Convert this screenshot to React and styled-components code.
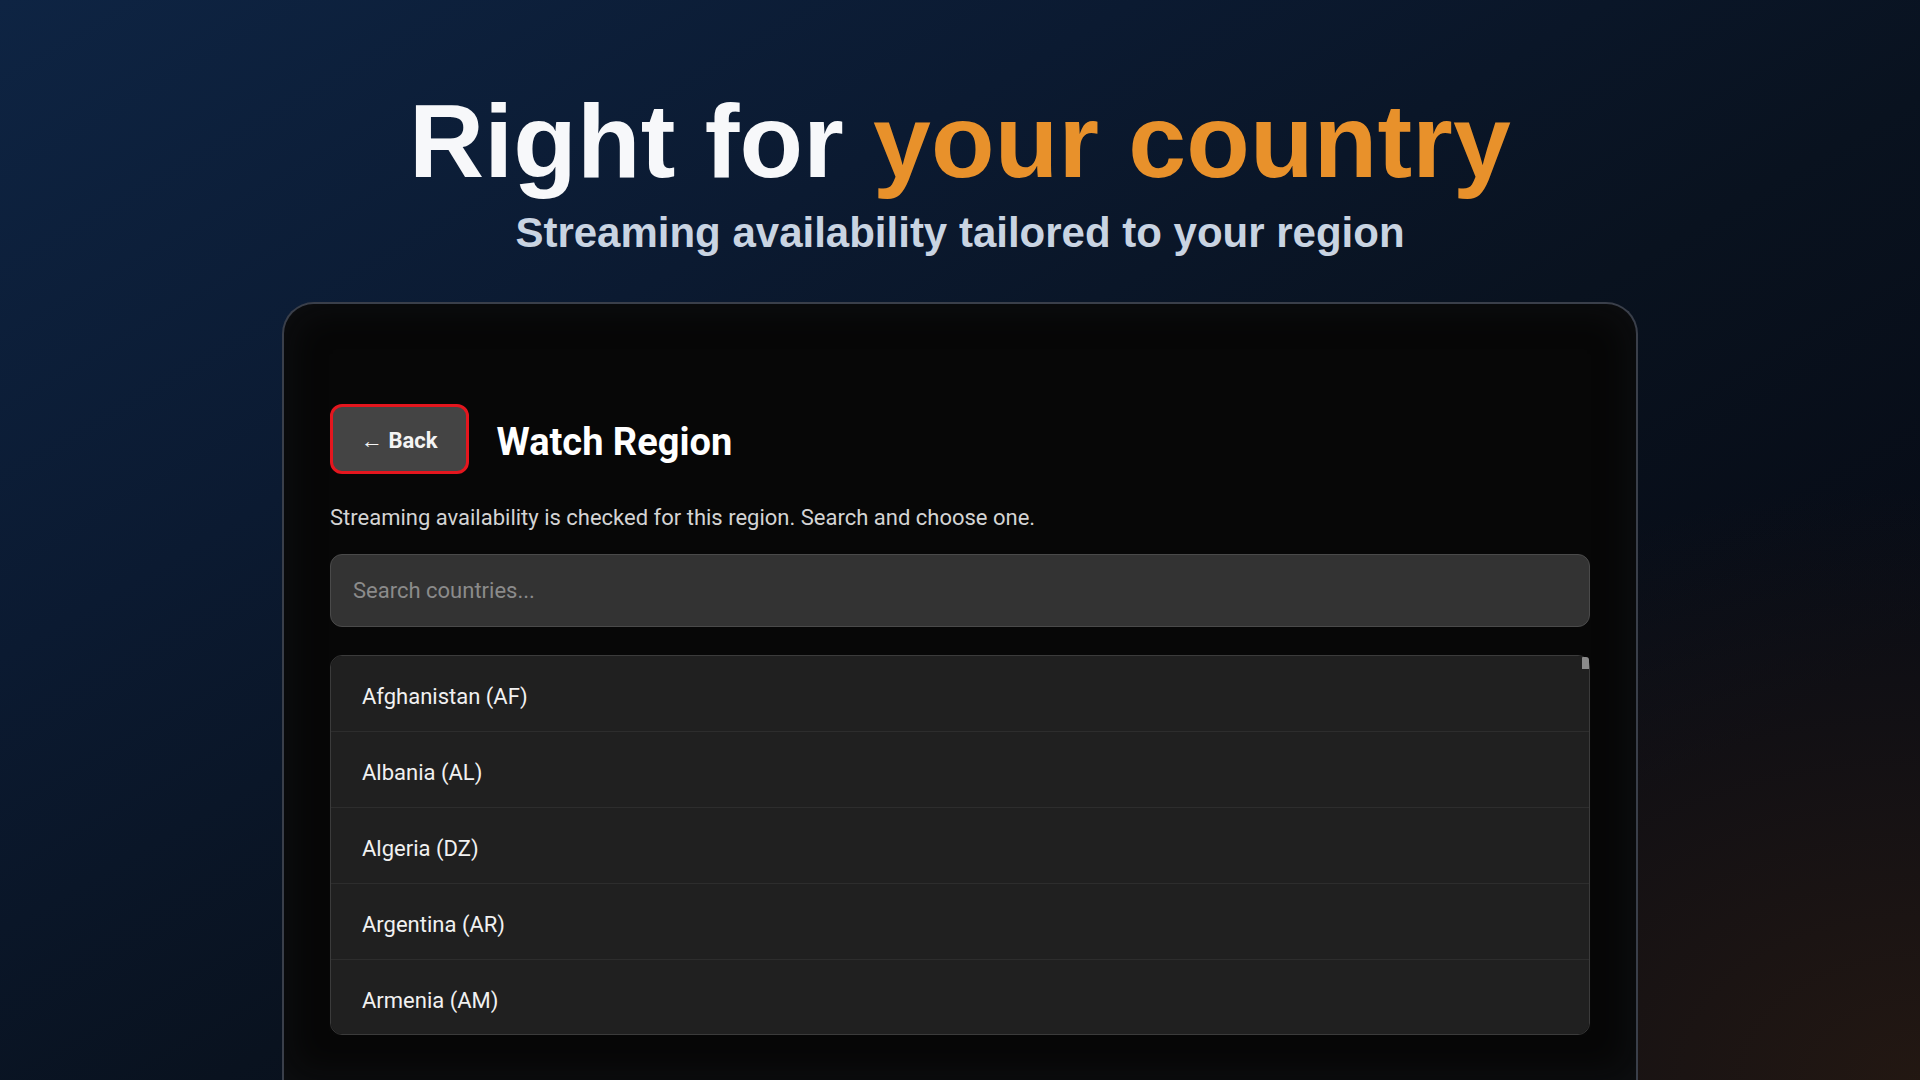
import styled, { createGlobalStyle } from 'styled-components';

const COUNTRIES = 'Afghanistan:AF|Albania:AL|Algeria:DZ|Argentina:AR|Armenia:AM|Australia:AU|Austria:AT|Azerbaijan:AZ|Bahamas:BS|Bahrain:BH|Bangladesh:BD|Barbados:BB|Belarus:BY|Belgium:BE|Belize:BZ|Benin:BJ|Bermuda:BM|Bhutan:BT|Bolivia:BO|Bosnia and Herzegovina:BA|Botswana:BW|Brazil:BR|Brunei:BN|Bulgaria:BG|Burkina Faso:BF|Cambodia:KH|Cameroon:CM|Canada:CA|Cape Verde:CV|Chad:TD|Chile:CL|China:CN|Colombia:CO|Costa Rica:CR|Croatia:HR|Cuba:CU|Cyprus:CY|Czech Republic:CZ|Denmark:DK|Dominican Republic:DO|Ecuador:EC|Egypt:EG|El Salvador:SV|Estonia:EE|Ethiopia:ET|Fiji:FJ|Finland:FI|France:FR|Gabon:GA|Georgia:GE|Germany:DE|Ghana:GH|Greece:GR|Guatemala:GT|Guyana:GY|Haiti:HT|Honduras:HN|Hong Kong:HK|Hungary:HU|Iceland:IS|India:IN|Indonesia:ID|Iraq:IQ|Ireland:IE|Israel:IL|Italy:IT|Ivory Coast:CI|Jamaica:JM|Japan:JP|Jordan:JO|Kazakhstan:KZ|Kenya:KE|Kosovo:XK|Kuwait:KW|Kyrgyzstan:KG|Laos:LA|Latvia:LV|Lebanon:LB|Libya:LY|Liechtenstein:LI|Lithuania:LT|Luxembourg:LU|Macao:MO|Madagascar:MG|Malawi:MW|Malaysia:MY|Maldives:MV|Mali:ML|Malta:MT|Mauritius:MU|Mexico:MX|Moldova:MD|Monaco:MC|Mongolia:MN|Montenegro:ME|Morocco:MA|Mozambique:MZ|Namibia:NA|Nepal:NP|Netherlands:NL|New Zealand:NZ|Nicaragua:NI|Niger:NE|Nigeria:NG|North Macedonia:MK|Norway:NO|Oman:OM|Pakistan:PK|Palestine:PS|Panama:PA|Papua New Guinea:PG|Paraguay:PY|Peru:PE|Philippines:PH|Poland:PL|Portugal:PT|Qatar:QA|Romania:RO|Russia:RU|Rwanda:RW|San Marino:SM|Saudi Arabia:SA|Senegal:SN|Serbia:RS|Seychelles:SC|Singapore:SG|Slovakia:SK|Slovenia:SI|South Africa:ZA|South Korea:KR|Spain:ES|Sri Lanka:LK|Sweden:SE|Switzerland:CH|Taiwan:TW|Tajikistan:TJ|Tanzania:TZ|Thailand:TH|Trinidad and Tobago:TT|Tunisia:TN|Turkey:TR|Turkmenistan:TM|Uganda:UG|Ukraine:UA|United Arab Emirates:AE|United Kingdom:GB|United States:US|Uruguay:UY|Uzbekistan:UZ|Venezuela:VE|Vietnam:VN|Yemen:YE|Zambia:ZM|Zimbabwe:ZW'
    .split('|')
    .map((entry) => entry.split(':'));

function App() {
    return (
        <Page>
            <GlobalStyle />
            <Hero>
                <Headline>
                    Right for <Accent>your country</Accent>
                </Headline>
                <Tagline>Streaming availability tailored to your region</Tagline>
            </Hero>

            <DeviceFrame>
                <Screen>
                    <TitleRow>
                        <BackButton>← Back</BackButton>
                        <Title>Watch Region</Title>
                    </TitleRow>
                    <Description>
                        Streaming availability is checked for this region. Search and choose one.
                    </Description>
                    <SearchInput placeholder="Search countries..." />
                    <ListWrap>
                        <CountryList>
                            {COUNTRIES.map(([name, code]) => (
                                <CountryRow key={code}>
                                    {name} ({code})
                                </CountryRow>
                            ))}
                        </CountryList>
                        {/* thin scroll indicator, the list is long so the thumb stays tiny */}
                        <ScrollThumb />
                    </ListWrap>
                </Screen>
            </DeviceFrame>
        </Page>
    );
}

export default App;

const GlobalStyle = createGlobalStyle`
    html, body {
        margin: 0;
        padding: 0;
        background: #0a1528;
    }
    * {
        box-sizing: border-box;
    }
`;

const Page = styled.div`
    height: 100vh;
    overflow: hidden;
    display: flex;
    flex-direction: column;
    align-items: center;
    background:
        radial-gradient(ellipse 45% 55% at 100% 100%, rgba(36, 24, 18, 0.95), rgba(36, 24, 18, 0) 100%),
        linear-gradient(150deg, #0e2443 0%, #0b1a31 30%, #09121f 55%, #070b15 80%);
`;

const Hero = styled.header`
    padding-top: 89px;
    text-align: center;
    font-family: "Liberation Sans", Arial, sans-serif;
    font-weight: 700;
`;

const Headline = styled.h1`
    margin: 0;
    font-size: 104px;
    line-height: 104px;
    font-weight: 700;
    color: #f7f8fa;
    letter-spacing: 0.2px;
`;

const Accent = styled.span`
    color: #e8912b;
`;

const Tagline = styled.p`
    margin: 15px 0 0;
    font-size: 42px;
    line-height: 50px;
    color: #c9d4e2;
`;

const DeviceFrame = styled.div`
    margin-top: 44px;
    width: 1356px;
    flex: 1;
    border: 2px solid #3a3f4a;
    border-bottom: none;
    border-radius: 32px 32px 0 0;
    background: #070707;
    box-shadow: inset 0 0 40px rgba(30, 34, 42, 0.35);
    overflow: hidden;
`;

const Screen = styled.div`
    padding: 100px 46px 0;
    font-family: Roboto, "Noto Sans", sans-serif;
`;

const TitleRow = styled.div`
    display: flex;
    align-items: center;
    gap: 28px;
`;

const BackButton = styled.button`
    height: 70px;
    padding: 4px 28px 0;
    border: 3px solid #e4161e;
    border-radius: 12px;
    background: #444444;
    color: #f4f4f4;
    font-family: Roboto, "Noto Sans", sans-serif;
    font-size: 22px;
    font-weight: 700;
    cursor: pointer;
`;

const Title = styled.h2`
    margin: 0;
    padding-top: 5px;
    font-size: 38px;
    font-weight: 700;
    color: #ffffff;
`;

const Description = styled.p`
    margin: 29px 0 0;
    font-size: 22px;
    line-height: 30px;
    color: #d4d4d4;
`;

const SearchInput = styled.input`
    display: block;
    width: 100%;
    height: 73px;
    margin-top: 21px;
    padding: 0 22px;
    border: 1px solid #4a4a4a;
    border-radius: 12px;
    background: #333333;
    color: #eeeeee;
    font-family: Roboto, "Noto Sans", sans-serif;
    font-size: 22px;
    outline: none;

    &::placeholder {
        color: #8b8b8b;
    }
`;

const ListWrap = styled.div`
    position: relative;
    margin-top: 28px;
`;

const CountryList = styled.ul`
    list-style: none;
    margin: 0;
    padding: 0;
    max-height: 380px;
    overflow-y: auto;
    scrollbar-width: none;
    border: 1px solid #3b3b3b;
    border-radius: 12px;
    background: #202020;
`;

const ScrollThumb = styled.div`
    position: absolute;
    top: 2px;
    right: 1px;
    width: 7px;
    height: 12px;
    border-radius: 1px 3px 0 0;
    background: #8a8a8a;
`;

const CountryRow = styled.li`
    height: 76px;
    display: flex;
    align-items: center;
    padding: 6px 31px 0;
    border-bottom: 1px solid #2d2d2d;
    font-size: 22px;
    color: #f1f1f1;
`;
